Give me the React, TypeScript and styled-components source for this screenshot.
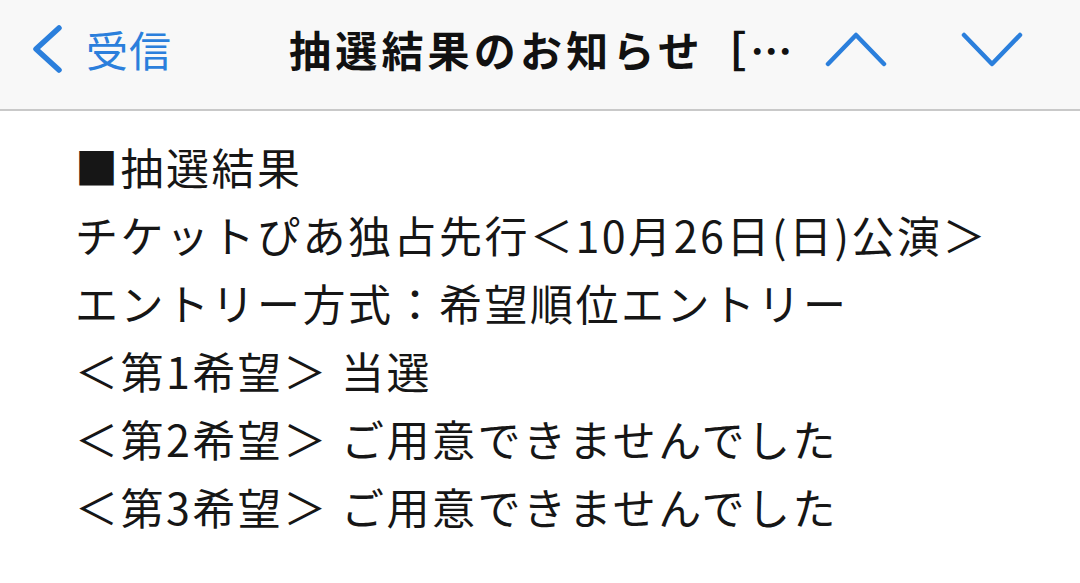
import styled, { createGlobalStyle } from 'styled-components'

const GlobalStyle = createGlobalStyle`
  html, body {
    margin: 0;
    padding: 0;
    background: #ffffff;
    font-family: "Noto Sans CJK JP", "Noto Sans", sans-serif;
  }
`

const BLUE = '#2b7fdc'

const Screen = styled.div`
  width: 1080px;
  height: 583px;
  overflow: hidden;
  background: #ffffff;
`

const NavBar = styled.header`
  height: 111px;
  display: flex;
  align-items: center;
  background: #f8f8f8;
  border-bottom: 2px solid #c9c9c9;
  box-sizing: border-box;
  padding: 0 0 12px 30px;
`

const BackButton = styled.button`
  display: flex;
  align-items: center;
  gap: 22px;
  padding: 0;
  border: none;
  background: none;
  color: ${BLUE};
  font-family: inherit;
  font-size: 42px;
  letter-spacing: 1px;
  cursor: pointer;
`

const Title = styled.h1`
  margin: 0 0 0 117px;
  font-size: 42px;
  font-weight: 700;
  color: #111111;
  letter-spacing: 4.2px;
  white-space: nowrap;
  flex: 0 0 auto;
`

const Arrows = styled.div`
  display: flex;
  align-items: center;
  gap: 74px;
  margin-left: auto;
  margin-right: 57px;
`

const ArrowButton = styled.button`
  display: flex;
  padding: 0;
  border: none;
  background: none;
  cursor: pointer;
`

const Body = styled.main`
  padding: 21px 0 0 75px;
  display: flex;
  flex-direction: column;
`

const Line = styled.div`
  font-size: 43px;
  line-height: 68px;
  color: #161616;
  letter-spacing: 2.5px;
  white-space: nowrap;
`

const Chevron = ({ dir }: { dir: 'left' | 'up' | 'down' }) => {
  if (dir === 'left') {
    return (
      <svg width="34" height="48" viewBox="0 0 34 48">
        <path d="M29 3 L6 24 L29 45" fill="none" stroke={BLUE} strokeWidth="5.5" strokeLinecap="round" strokeLinejoin="round" />
      </svg>
    )
  }
  const d = dir === 'up' ? 'M3 34 L31 5 L59 34' : 'M3 5 L31 34 L59 5'
  return (
    <svg width="62" height="38" viewBox="0 0 62 38">
      <path d={d} fill="none" stroke={BLUE} strokeWidth="4.5" strokeLinecap="round" strokeLinejoin="round" />
    </svg>
  )
}

const lines = [
  '■抽選結果',
  'チケットぴあ独占先行＜10月26日(日)公演＞',
  'エントリー方式：希望順位エントリー',
  '＜第1希望＞ 当選',
  '＜第2希望＞ ご用意できませんでした',
  '＜第3希望＞ ご用意できませんでした',
]

export default function App() {
  return (
    <Screen>
      <GlobalStyle />
      <NavBar>
        <BackButton>
          <Chevron dir="left" />
          受信
        </BackButton>
        <Title>抽選結果のお知らせ［…</Title>
        <Arrows>
          <ArrowButton><Chevron dir="up" /></ArrowButton>
          <ArrowButton><Chevron dir="down" /></ArrowButton>
        </Arrows>
      </NavBar>
      <Body>
        {lines.map((text) => (
          <Line key={text}>{text}</Line>
        ))}
      </Body>
    </Screen>
  )
}
